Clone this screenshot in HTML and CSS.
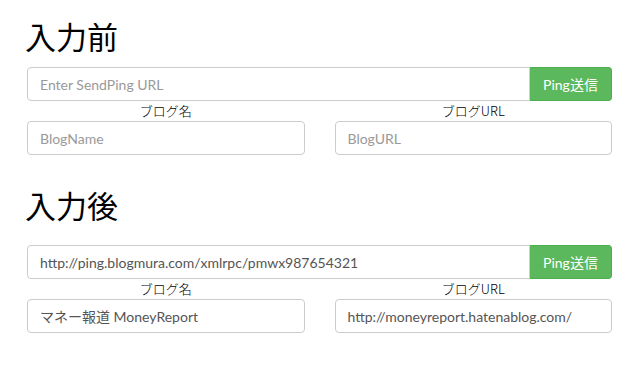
FILE: index.html
```html
<!DOCTYPE html>
<html lang="ja">
<head>
    <meta charset="UTF-8">
    <meta name="viewport" content="width=device-width, initial-scale=1.0">
    <title>Ping送信</title>
    <link rel="stylesheet" href="styles.css">
</head>
<body>

<div class="container">
    <div class="section section-before">
        <h1 class="title">入力前</h1>
        <div class="input-group">
            <input class="form-control" type="text" placeholder="Enter SendPing URL">
            <button class="btn-ping">Ping送信</button>
        </div>
        <div class="row">
            <div class="col">
                <label class="col-label">ブログ名</label>
                <input class="form-control" type="text" placeholder="BlogName">
            </div>
            <div class="col">
                <label class="col-label">ブログURL</label>
                <input class="form-control" type="text" placeholder="BlogURL">
            </div>
        </div>
    </div>

    <div class="section section-after">
        <h1 class="title">入力後</h1>
        <div class="input-group">
            <input class="form-control" type="text" value="http://ping.blogmura.com/xmlrpc/pmwx987654321">
            <button class="btn-ping">Ping送信</button>
        </div>
        <div class="row">
            <div class="col">
                <label class="col-label">ブログ名</label>
                <input class="form-control" type="text" value="マネー報道 MoneyReport">
            </div>
            <div class="col">
                <label class="col-label">ブログURL</label>
                <input class="form-control" type="text" value="http://moneyreport.hatenablog.com/">
            </div>
        </div>
    </div>
</div>

</body>
</html>
```

FILE: styles.css
```css
body {
    margin: 0;
    background: #fff;
    color: #222;
    font-family: Lato, "Noto Sans CJK JP", sans-serif;
}
.container {
    padding: 0 27px;
}
.title {
    margin: 0;
    height: 36px;
    line-height: 36px;
    font-family: "Noto Sans CJK JP", sans-serif;
    font-size: 31px;
    font-weight: 400;
    color: #000;
    margin-left: -2px;
}
.section-before {
    padding-top: 18px;
}
.section-before .title {
    margin-bottom: 13px;
}
.section-after {
    padding-top: 32px;
}
.section-after .title {
    margin-bottom: 22px;
}
.form-control {
    display: block;
    box-sizing: border-box;
    width: 100%;
    height: 34px;
    padding: 6px 12px;
    font-family: Lato, "Noto Sans CJK JP", sans-serif;
    font-size: 14px;
    color: #555;
    background: #fff;
    border: 1px solid #ccc;
    border-radius: 4px;
    outline: none;
}
.form-control::placeholder {
    color: #999;
}
.input-group {
    display: flex;
}
.input-group .form-control {
    flex: 1;
    border-radius: 4px 0 0 4px;
}
.btn-ping {
    width: 82px;
    height: 34px;
    padding: 6px 12px;
    font-family: Lato, "Noto Sans CJK JP", sans-serif;
    font-size: 14px;
    color: #fff;
    background: #5cb85c;
    border: 1px solid #4cae4c;
    border-left: none;
    border-radius: 0 4px 4px 0;
    cursor: pointer;
}
.row {
    display: grid;
    grid-template-columns: 1fr 1fr;
    gap: 30px;
}
.col-label {
    display: block;
    height: 20px;
    line-height: 20px;
    text-align: center;
    font-family: "Noto Sans CJK JP", sans-serif;
    font-size: 13px;
    font-weight: 300;
    color: #000;
}
```
